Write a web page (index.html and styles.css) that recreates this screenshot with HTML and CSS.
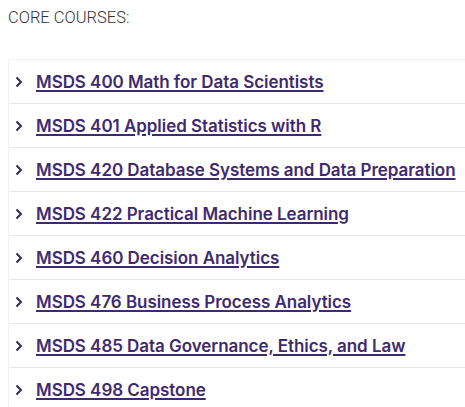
FILE: index.html
```html
<!DOCTYPE html>
<html>
<head>
<meta charset="utf-8">
<link rel="stylesheet" href="styles.css">
</head>
<body>
<p class="heading">CORE COURSES:</p>
<ul class="courses">
  <li class="course"><span class="chev"><svg width="8" height="12" viewBox="0 0 8 12"><path d="M1.5 1.5 L6 6 L1.5 10.5" fill="none" stroke="#2e2552" stroke-width="1.9"/></svg></span><a href="#">MSDS 400 Math for Data Scientists</a></li>
  <li class="course"><span class="chev"><svg width="8" height="12" viewBox="0 0 8 12"><path d="M1.5 1.5 L6 6 L1.5 10.5" fill="none" stroke="#2e2552" stroke-width="1.9"/></svg></span><a href="#">MSDS 401 Applied Statistics with R</a></li>
  <li class="course"><span class="chev"><svg width="8" height="12" viewBox="0 0 8 12"><path d="M1.5 1.5 L6 6 L1.5 10.5" fill="none" stroke="#2e2552" stroke-width="1.9"/></svg></span><a href="#">MSDS 420 Database Systems and Data Preparation</a></li>
  <li class="course"><span class="chev"><svg width="8" height="12" viewBox="0 0 8 12"><path d="M1.5 1.5 L6 6 L1.5 10.5" fill="none" stroke="#2e2552" stroke-width="1.9"/></svg></span><a href="#">MSDS 422 Practical Machine Learning</a></li>
  <li class="course"><span class="chev"><svg width="8" height="12" viewBox="0 0 8 12"><path d="M1.5 1.5 L6 6 L1.5 10.5" fill="none" stroke="#2e2552" stroke-width="1.9"/></svg></span><a href="#">MSDS 460 Decision Analytics</a></li>
  <li class="course"><span class="chev"><svg width="8" height="12" viewBox="0 0 8 12"><path d="M1.5 1.5 L6 6 L1.5 10.5" fill="none" stroke="#2e2552" stroke-width="1.9"/></svg></span><a href="#">MSDS 476 Business Process Analytics</a></li>
  <li class="course"><span class="chev"><svg width="8" height="12" viewBox="0 0 8 12"><path d="M1.5 1.5 L6 6 L1.5 10.5" fill="none" stroke="#2e2552" stroke-width="1.9"/></svg></span><a href="#">MSDS 485 Data Governance, Ethics, and Law</a></li>
  <li class="course"><span class="chev"><svg width="8" height="12" viewBox="0 0 8 12"><path d="M1.5 1.5 L6 6 L1.5 10.5" fill="none" stroke="#2e2552" stroke-width="1.9"/></svg></span><a href="#">MSDS 498 Capstone</a></li>
</ul>
</body>
</html>
```
FILE: styles.css
```css
html, body { margin: 0; padding: 0; background: #fff; }
body { padding: 0 0 0 8px; overflow: hidden; }
.heading {
  margin: 0;
  padding-top: 8px;
  height: 59px;
  box-sizing: border-box;
  font-family: Roboto, "Liberation Sans", sans-serif;
  font-weight: 300;
  font-size: 16.5px;
  line-height: 20px;
  color: #333;
}
.courses {
  list-style: none;
  margin: 0;
  padding: 0;
  width: 470px;
  border-top: 1px solid #f2f2f2;
  border-left: 1px solid #f2f2f2;
}
.course {
  display: flex;
  align-items: center;
  height: 43px;
  border-bottom: 1px solid #e8e8e8;
  padding-left: 6px;
}
.chev { width: 21px; display: flex; align-items: center; }
.course a {
  font-family: Inter, "Liberation Sans", sans-serif;
  font-weight: 600;
  font-size: 17px;
  letter-spacing: -0.05px;
  color: #3f2a70;
  text-decoration: underline;
  text-decoration-thickness: 2px;
  text-underline-offset: 2px;
}
```
